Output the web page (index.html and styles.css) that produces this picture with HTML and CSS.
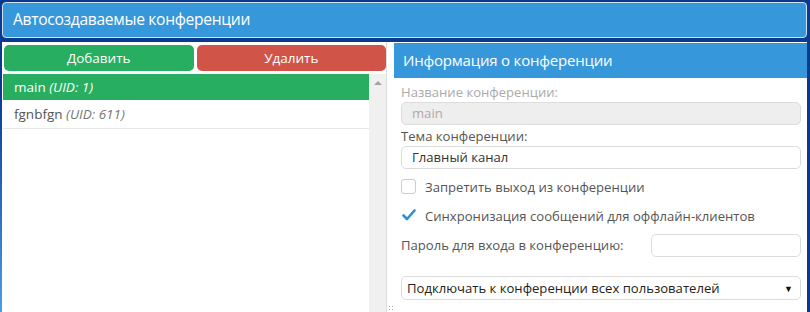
FILE: index.html
```html
<!DOCTYPE html>
<html lang="ru">
<head>
<meta charset="utf-8">
<link rel="stylesheet" href="styles.css">
</head>
<body>
<div class="page">
  <header class="top">Автосоздаваемые конференции</header>
  <div class="main">
    <section class="left">
      <div class="btns">
        <button class="btn add">Добавить</button>
        <button class="btn del">Удалить</button>
      </div>
      <div class="list-wrap">
        <ul class="list">
          <li class="item sel">main <i>(UID: 1)</i></li>
          <li class="item">fgnbfgn <i>(UID: 611)</i></li>
        </ul>
        <div class="scroll"><span class="up"></span></div>
      </div>
    </section>
    <div class="splitter"><span class="grip"></span></div>
    <section class="right">
      <div class="rhead">Информация о конференции</div>
      <div class="form">
        <label class="lbl dis">Название конференции:</label>
        <div class="inp disabled">main</div>
        <label class="lbl">Тема конференции:</label>
        <div class="inp">Главный канал</div>
        <div class="chk"><span class="box"></span><span>Запретить выход из конференции</span></div>
        <div class="chk"><span class="box on"><svg width="14" height="12" viewBox="0 0 14 12"><path d="M1.5 6.5 L5 10 L12.5 1.5" fill="none" stroke="#2e8fd8" stroke-width="2.6" stroke-linecap="round" stroke-linejoin="round"/></svg></span><span>Синхронизация сообщений для оффлайн-клиентов</span></div>
        <div class="pass"><span class="lbl">Пароль для входа в конференцию:</span><div class="inp small"></div></div>
        <div class="sel-box"><span>Подключать к конференции всех пользователей</span><span class="arr">▼</span></div>
      </div>
    </section>
  </div>
</div>
</body>
</html>
```
FILE: styles.css
```css
html, body { margin: 0; padding: 0; }
body {
  width: 810px; height: 312px; overflow: hidden;
  background: linear-gradient(to bottom, #0a3a90 90px, #4a9ee0 312px) left top / 2px 100% no-repeat, #0a3a90;
  font-family: "Open Sans", "Noto Sans", sans-serif;
}
.page { padding: 2px 3px 0 2px; display: flex; flex-direction: column; gap: 4px; height: 310px; }
.top {
  height: 36px; flex: none; box-sizing: border-box;
  background: #3797db; border: 1px solid #cfe3f5; border-radius: 4px;
  color: #fff; font-size: 15.6px; letter-spacing: -0.3px; line-height: 33px; padding-left: 10px;
}
.main { display: flex; flex: 1; min-height: 0; background: #fff; }
.left {
  width: 384px; display: flex; flex-direction: column; padding: 3px 0 0 1px; box-sizing: border-box;
}
.btns { display: flex; gap: 3px; padding: 0 0 3px 1px; }
.btn {
  flex: 1; height: 26px; border: 0; border-radius: 5px; color: #fff;
  font-family: inherit; font-size: 13.5px; padding: 0;
}
.add { background: #27ae60; }
.del { background: #d05548; }
.list-wrap { flex: 1; display: flex; }
.list { list-style: none; margin: 0; padding: 0; flex: 1; }
.item {
  height: 29px; line-height: 28px; padding-left: 11px; font-size: 13.5px; color: #555;
  border-bottom: 1px solid #e6e6e6; box-sizing: border-box;
}
.item i { color: #777; }
.item.sel { background: #27ae60; color: #fff; border-bottom: 0; height: 26px; line-height: 26px; }
.item.sel i { color: #fff; }
.scroll { width: 17px; background: #f0f0f0; position: relative; }
.up {
  position: absolute; left: 5px; top: 7px; width: 0; height: 0;
  border-left: 4px solid transparent; border-right: 4px solid transparent; border-bottom: 4px solid #a3a3a3;
}
.splitter { width: 7px; border-left: 1px solid #dcdcdc; position: relative; }
.grip {
  position: absolute; left: 1px; bottom: 1px; width: 6px; height: 6px;
  background-image: radial-gradient(circle, #9ab 0.8px, transparent 1px);
  background-size: 3px 3px;
}
.right { flex: 1; display: flex; flex-direction: column; padding-top: 1px; }
.rhead {
  height: 35px; background: #3797db; color: #fff; font-size: 15px; letter-spacing: -0.2px; line-height: 34px; padding-left: 9px;
}
.form { padding: 5px 6px 0 7px; display: flex; flex-direction: column; font-size: 13.1px; color: #555; }
.lbl { line-height: 19px; }
.lbl.dis { color: #aaa; }
.inp {
  height: 23px; box-sizing: border-box; border: 1px solid #dcdcdc; border-radius: 5px;
  padding-left: 10px; line-height: 21px; color: #333; margin-bottom: 3px;
}
.inp.disabled { background: #eee; color: #aaa; margin-bottom: 2px; }
.chk { display: flex; align-items: center; gap: 9px; height: 29px; }
.box {
  width: 15px; height: 15px; border: 1px solid #ccc; border-radius: 3px; box-sizing: border-box;
  display: flex; align-items: center; justify-content: center; position: relative;
}
.box.on { border: 0; }
.box svg { position: absolute; left: 1px; top: 1px; }
.pass { display: flex; align-items: center; justify-content: space-between; margin-top: 3px; height: 25px; }
.inp.small { width: 150px; margin: 0; }
.sel-box {
  margin-top: 18px; height: 24px; box-sizing: border-box; border: 1px solid #dcdcdc; border-radius: 5px;
  display: flex; align-items: center; justify-content: space-between; padding: 0 7px 0 5px; color: #222;
}
.arr { font-size: 9px; color: #111; }
```
